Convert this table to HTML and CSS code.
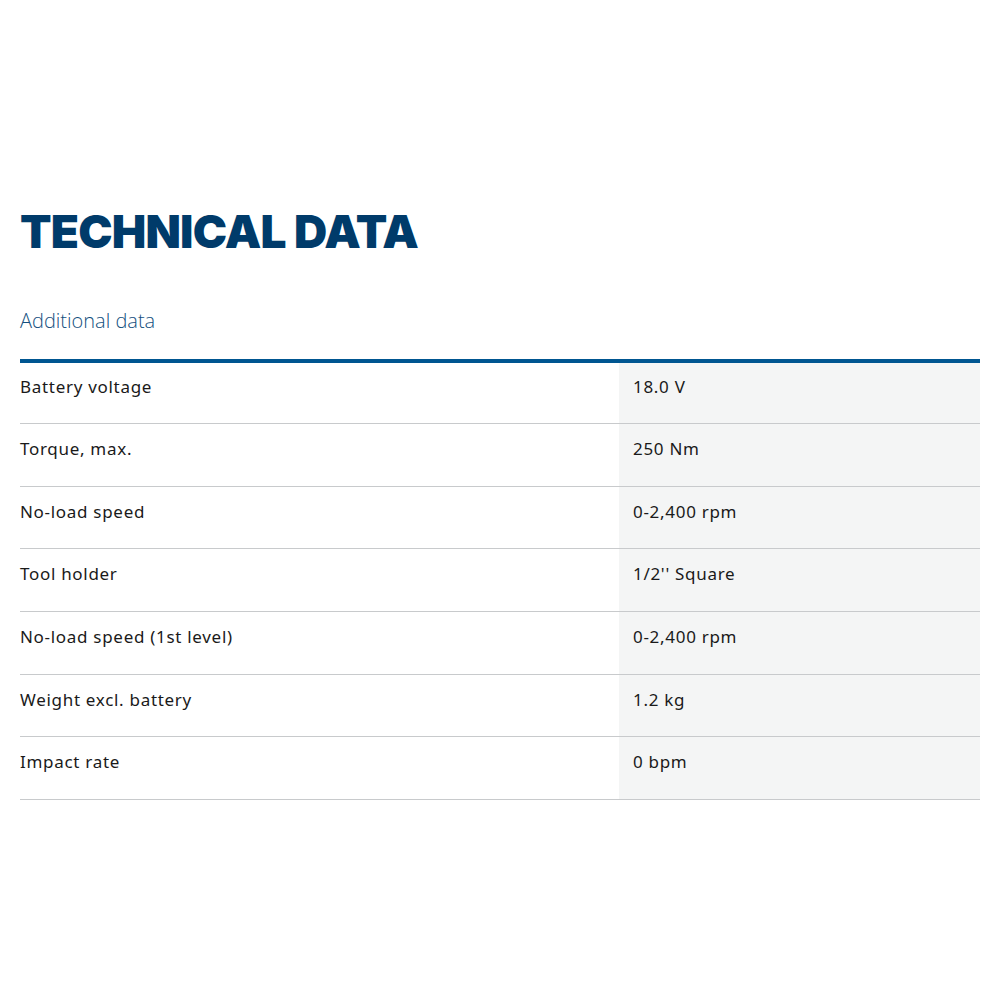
FILE: index.html
```html
<!DOCTYPE html>
<html>
<head>
<meta charset="utf-8">
<link rel="stylesheet" href="styles.css">
</head>
<body>
<main class="page">
  <h1 class="title">TECHNICAL DATA</h1>
  <h2 class="subtitle">Additional data</h2>
  <table class="specs">
    <tbody>
      <tr><td class="label">Battery voltage</td><td class="value">18.0 V</td></tr>
      <tr><td class="label">Torque, max.</td><td class="value">250 Nm</td></tr>
      <tr><td class="label">No-load speed</td><td class="value">0-2,400 rpm</td></tr>
      <tr><td class="label">Tool holder</td><td class="value">1/2'' Square</td></tr>
      <tr><td class="label">No-load speed (1st level)</td><td class="value">0-2,400 rpm</td></tr>
      <tr><td class="label">Weight excl. battery</td><td class="value">1.2 kg</td></tr>
      <tr><td class="label">Impact rate</td><td class="value">0 bpm</td></tr>
    </tbody>
  </table>
</main>
</body>
</html>
```

FILE: styles.css
```css
html, body {
  margin: 0;
  padding: 0;
  background: #ffffff;
}

.page {
  padding: 200px 20px 0 20px;
  font-family: "Noto Sans", "Open Sans", sans-serif;
  color: #1a1a1a;
}

.title {
  margin: 0;
  font-family: Inter, "Liberation Sans", sans-serif;
  font-weight: 900;
  font-size: 46px;
  line-height: 62px;
  letter-spacing: -0.8px;
  color: #003b6a;
}

.subtitle {
  margin: 46px 0 0 0;
  font-family: "Open Sans", "Noto Sans", sans-serif;
  font-weight: 300;
  font-size: 20px;
  line-height: 26px;
  color: #134f7e;
}

.specs {
  margin-top: 25px;
  width: 100%;
  border-collapse: collapse;
  border-top: 4px solid #005691;
}

.specs td {
  height: 62.67px;
  padding: 0 14px 12px 0;
  border-bottom: 1px solid #c8cacc;
  font-size: 17px;
  letter-spacing: 0.7px;
  line-height: 24px;
  vertical-align: middle;
  box-sizing: border-box;
}

.specs .label {
  width: 599px;
}

.specs .value {
  background: #f4f5f5;
  padding-left: 14px;
}
```
